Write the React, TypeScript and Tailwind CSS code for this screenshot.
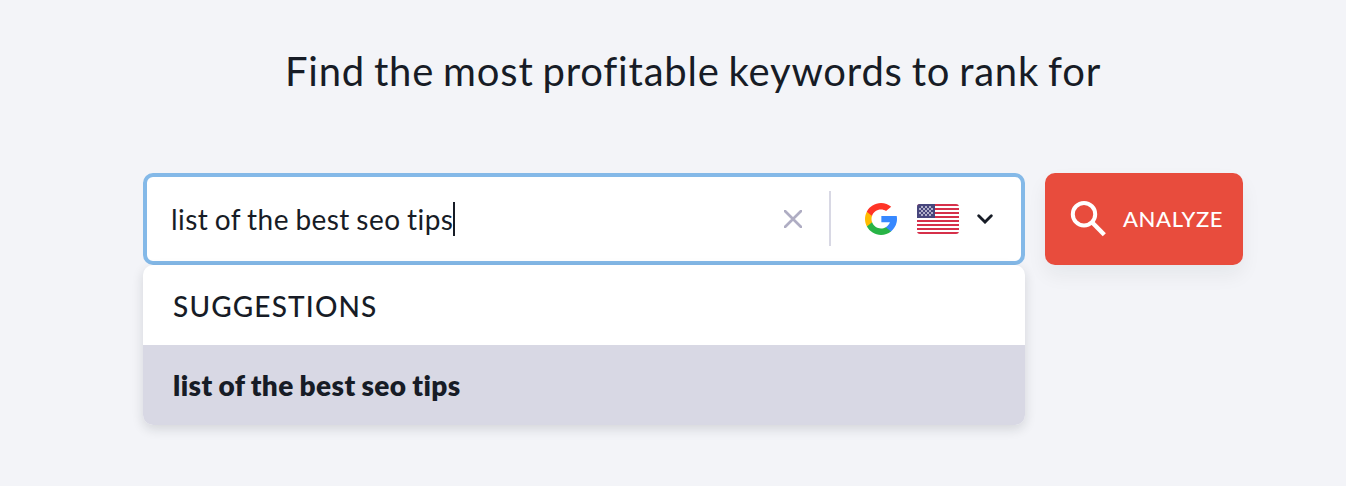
import React, { useState } from 'react';

interface FlagProps {
  className?: string;
}

const GoogleLogo: React.FC = () => (
  <svg className="w-8 h-8 shrink-0" viewBox="0 0 512 512">
    <path d="M113.5 309.4L95.6 376l-65.2 1.4C11 341.2 0 299.9 0 256c0-42.5 10.3-82.5 28.6-117.7l58.1 10.6 25.4 57.7C106.8 222.1 103.9 238.7 103.9 256c0 18.8 3.4 36.8 9.6 53.4z" fill="#FFBB00" />
    <path d="M507.5 208.2C510.5 223.7 512 239.7 512 256c0 18.3-1.9 36.1-5.6 53.4-12.5 58.7-45 109.9-90.1 146.2l-73.1-3.7-10.3-64.6c30-17.6 53.4-45 65.7-77.9H261.7V208.2h245.8z" fill="#3788FF" />
    <path d="M416.3 455.6C372.4 490.9 316.7 512 256 512c-97.5 0-182.3-54.5-225.5-134.7l83-67.9C135.1 367.1 190.8 408.2 256 408.2c28 0 54.3-7.6 76.8-20.8l83.5 68.2z" fill="#28B446" />
    <path d="M419.4 58.9l-82.9 67.9C313.1 112.2 285.5 103.8 256 103.8c-66.7 0-123.4 42.9-143.9 102.7l-83.5-68.2C71.2 56.1 157.1 0 256 0c62.1 0 119.1 22.1 163.4 58.9z" fill="#FF3426" />
  </svg>
);

const UsFlag: React.FC<FlagProps> = ({ className }) => (
  <svg className={className} viewBox="0 0 42 30" shapeRendering="crispEdges">
    <rect width="42" height="30" fill="#ffffff" />
    {[0, 4, 8, 12, 16, 20, 24, 28].map((y) => (
      <rect key={y} y={y} width="42" height="2" fill="#D6304A" />
    ))}
    <rect width="18" height="14" fill="#47467D" />
    {/* Staggered stars */}
    {[2, 4, 6, 8, 10].map((y, row) =>
      (row % 2 === 0 ? [4, 8, 12] : [2, 6, 10, 14]).map((x) => (
        <rect key={`${x}-${y}`} x={x} y={y} width="2" height="2" fill="#B0AFC9" />
      ))
    )}
  </svg>
);

export const App: React.FC = () => {
  const [keyword, setKeyword] = useState('list of the best seo tips');

  return (
    <div className="min-h-screen bg-[#f3f4f8] font-['Lato',sans-serif] text-[#171c26] overflow-hidden">
      <h1 className="pt-[41px] pl-10 text-center text-[40px] leading-[60px] tracking-[0.8px] [word-spacing:-2.1px] whitespace-nowrap">
        Find the most profitable keywords to rank for
      </h1>

      <div className="mt-[72px] ml-[143px] flex items-start gap-5">
        <div className="w-[882px]">
          {/* Search field */}
          <div className="flex h-[92px] items-center rounded-[10px] border-4 border-[#84b9e8] bg-white pl-6">
            <div className="flex flex-1 items-center">
              <span className="text-[28px] leading-9 tracking-[0.45px] [word-spacing:-1.1px] whitespace-nowrap">{keyword}</span>
              <span className="h-[34px] w-0.5 bg-[#171c26]" />
            </div>
            <button type="button" aria-label="Clear" className="mr-[27px]" onClick={() => setKeyword('')}>
              <svg className="block h-[18px] w-[18px]" viewBox="0 0 18 18" stroke="#afadc3" strokeWidth="2.7" strokeLinecap="round">
                <path d="M0.8 0.8L17.2 17.2M17.2 0.8L0.8 17.2" />
              </svg>
            </button>
            <span className="mb-px h-[55px] w-0.5 bg-[#d8d8e4]" />
            <button type="button" className="ml-[34px] mr-7 flex items-center">
              <GoogleLogo />
              <UsFlag className="ml-5 h-[30px] w-[42px] rounded-[3px]" />
              <svg className="ml-[18px] h-[10px] w-4" viewBox="0 0 16 10" fill="none" stroke="#171c26" strokeWidth="2.8" strokeLinecap="round">
                <path d="M1.7 1.8L8 8.1L14.3 1.8" />
              </svg>
            </button>
          </div>

          {/* Suggestions dropdown */}
          <div className="overflow-hidden rounded-[10px] bg-white shadow-[0_4px_12px_rgba(23,28,38,0.14)]">
            <div className="flex h-20 items-center pl-[30px] pt-0.5 text-[28px] font-medium tracking-[1.15px]">
              SUGGESTIONS
            </div>
            <div className="flex h-20 items-center bg-[#d8d8e4] pl-[30px] text-[28px] font-extrabold tracking-[0.4px] [word-spacing:-1px]">
              list of the best seo tips
            </div>
          </div>
        </div>

        <button
          type="button"
          className="flex h-[92px] w-[198px] items-center rounded-[10px] bg-[#e84c3d] pl-[25px] text-white shadow-[0_10px_20px_rgba(23,28,38,0.06)]"
        >
          <svg className="h-9 w-9 shrink-0" viewBox="0 0 36 36" fill="none" stroke="#ffffff" strokeWidth="4">
            <circle cx="14" cy="13.2" r="11.2" />
            <path d="M22 21.2L34.3 33.7" strokeWidth="4.4" />
          </svg>
          <span className="ml-[17px] mb-0.5 text-[22px] font-medium tracking-[0.6px]">ANALYZE</span>
        </button>
      </div>
    </div>
  );
};

export default App;
